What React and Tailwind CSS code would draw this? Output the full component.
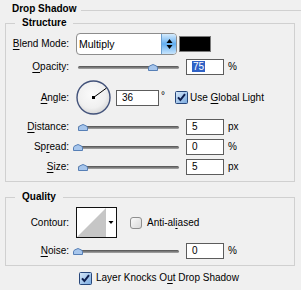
import React from 'react';

function U({ children }) {
  return <span className="underline decoration-1 underline-offset-[2px]">{children}</span>;
}

function Label({ children }) {
  return <div className="w-[63px] shrink-0 text-right leading-[14px]">{children}</div>;
}

function Slider({ thumb }) {
  return (
    <div className="relative ml-[5px] h-[15px] w-[105px] shrink-0">
      <div className="absolute left-[4px] right-0 top-[6px] h-[3px] rounded-full bg-linear-to-b from-[#4f4f4f] to-[#a9a9a9]" />
      <svg className="absolute top-[4px]" style={{ left: thumb - 5 }} width="10" height="7" viewBox="0 0 10 7">
        <path d="M0.5 6.5 V3.8 Q0.5 2.5 2 1.8 L5 0.5 L8 1.8 Q9.5 2.5 9.5 3.8 V6.5 Z" fill="#a7c6ec" stroke="#567fb6" />
      </svg>
    </div>
  );
}

function NumBox({ children, className = '' }) {
  return (
    <div className={`h-[16px] shrink-0 border border-[#5c5c5c] bg-white pl-[5px] leading-[14px] ${className}`}>
      {children}
    </div>
  );
}

function SliderRow({ label, thumb, value, unit, className = '' }) {
  return (
    <div className={`flex h-[16px] items-center ${className}`}>
      <Label>{label}</Label>
      <Slider thumb={thumb} />
      <NumBox className="ml-[7px] w-[38px]">{value}</NumBox>
      <span className="ml-[4px] leading-[14px]">{unit}</span>
    </div>
  );
}

function CheckOn() {
  return (
    <svg width="13" height="13" viewBox="0 0 13 13" className="shrink-0">
      <defs>
        <linearGradient id="cb" x1="0" y1="0" x2="1" y2="1">
          <stop offset="0" stopColor="#d9e9f9" />
          <stop offset="1" stopColor="#78a9df" />
        </linearGradient>
      </defs>
      <rect x="0.5" y="0.5" width="12" height="12" rx="1" fill="url(#cb)" stroke="#27467a" />
      <path d="M3 6.3 L5.4 9 L10 3.2" fill="none" stroke="#0d1d4d" strokeWidth="2" />
    </svg>
  );
}

function CheckOff() {
  return (
    <svg width="12" height="12" viewBox="0 0 12 12" className="shrink-0">
      <defs>
        <linearGradient id="cu" x1="0" y1="0" x2="1" y2="1">
          <stop offset="0" stopColor="#fbfbfb" />
          <stop offset="1" stopColor="#d8d8d8" />
        </linearGradient>
      </defs>
      <rect x="0.5" y="0.5" width="11" height="11" rx="2.5" fill="url(#cu)" stroke="#8e8e8e" />
    </svg>
  );
}

function Dial({ angle }) {
  const r = 16;
  const a = (angle * Math.PI) / 180;
  const x2 = 17.5 + r * Math.cos(a);
  const y2 = 17.5 - r * Math.sin(a);
  return (
    <svg width="35" height="35" viewBox="0 0 35 35" className="ml-[7px] shrink-0">
      <defs>
        <radialGradient id="dial" cx="0.45" cy="0.4" r="0.6">
          <stop offset="0" stopColor="#fafafa" />
          <stop offset="0.7" stopColor="#f0f0f0" />
          <stop offset="1" stopColor="#d9d9d9" />
        </radialGradient>
      </defs>
      <circle cx="17.5" cy="17.5" r="16.5" fill="url(#dial)" stroke="#42527a" strokeWidth="1.4" />
      <line x1="17.5" y1="17.5" x2={x2} y2={y2} stroke="#000" strokeWidth="1" />
      <rect x="16" y="16" width="3" height="3" fill="#000" />
    </svg>
  );
}

function Contour() {
  return (
    <svg width="41" height="31" viewBox="0 0 41 31" className="ml-[7px] shrink-0">
      <rect x="0.5" y="0.5" width="40" height="30" fill="#fff" stroke="#111" />
      <path d="M1 30 L30 1 L30 30 Z" fill="#c6c6c6" />
      <path d="M32.5 14 L37.5 14 L35 17 Z" fill="#000" />
    </svg>
  );
}

export default function App() {
  return (
    <div className="h-[290px] w-[301px] overflow-hidden bg-[#f0f0f0] font-['Liberation_Sans',Arial,sans-serif] text-[10px] text-black select-none">
      <div className="flex h-[16px] items-start pt-[2px]">
        <span className="pl-[12px] font-bold leading-[14px]">Drop Shadow</span>
        <div className="ml-[5px] mt-[8px] h-px flex-1 bg-[#d0d0d0]" />
      </div>

      <fieldset className="ml-[5px] w-[290px] border border-[#d0d0d0] pb-[6px]">
        <legend className="ml-[9px] px-[7px] font-bold leading-[14px]">Structure</legend>

        <div className="mt-[3px] flex h-[22px] items-center">
          <Label>
            <U>B</U>lend Mode:
          </Label>
          <div className="ml-[7px] flex h-[22px] w-[101px] shrink-0 items-center rounded-[4px] border border-[#8d8d8d] bg-white">
            <span className="flex-1 pl-[2px] text-[10.5px] leading-[14px]">Multiply</span>
            <div className="flex h-full w-[15px] items-center justify-center rounded-r-[3px] border-l border-[#6b9fd0] bg-linear-to-b from-[#d5ebfc] via-[#62aef0] to-[#c8e5fc]">
              <svg width="7" height="12" viewBox="0 0 7 12">
                <path d="M0.5 5 L3.5 1 L6.5 5 Z" fill="#000" />
                <path d="M0.5 7 L3.5 11 L6.5 7 Z" fill="#000" />
              </svg>
            </div>
          </div>
          <div className="ml-[2px] h-[16px] w-[32px] shrink-0 border border-[#7a7a7a] bg-black" />
        </div>

        <SliderRow
          className="mt-[4px]"
          label={<><U>O</U>pacity:</>}
          thumb={79}
          value={<span className="bg-[#2f62c6] px-px text-white">75</span>}
          unit="%"
        />

        <div className="mt-[5px] flex h-[35px] items-center">
          <Label>
            <U>A</U>ngle:
          </Label>
          <Dial angle={36} />
          <NumBox className="ml-[5px] w-[43px]">36</NumBox>
          <span className="ml-[2px] -mt-[4px] leading-[14px]">°</span>
          <div className="ml-[10px] flex items-center">
            <CheckOn />
            <span className="ml-[2px] leading-[14px]">
              Use <U>G</U>lobal Light
            </span>
          </div>
        </div>

        <SliderRow className="mt-[4px]" label={<><U>D</U>istance:</>} thumb={9} value="5" unit="px" />
        <SliderRow className="mt-[4px]" label={<>Sp<U>r</U>ead:</>} thumb={4} value="0" unit="%" />
        <SliderRow className="mt-[4px]" label={<><U>S</U>ize:</>} thumb={9} value="5" unit="px" />
      </fieldset>

      <fieldset className="ml-[5px] mt-[8px] w-[290px] border border-[#d0d0d0] pb-[6px]">
        <legend className="ml-[9px] px-[7px] font-bold leading-[14px]">Quality</legend>

        <div className="mt-[3px] flex h-[31px] items-center">
          <Label>Contour:</Label>
          <Contour />
          <div className="ml-[13px] flex items-center">
            <CheckOff />
            <span className="ml-[5px] leading-[14px]">
              Anti-al<U>i</U>ased
            </span>
          </div>
        </div>

        <SliderRow className="mt-[5px]" label={<><U>N</U>oise:</>} thumb={4} value="0" unit="%" />
      </fieldset>

      <div className="ml-[79px] mt-[5px] flex items-center">
        <CheckOn />
        <span className="ml-[4px] leading-[14px]">
          Layer Knocks O<U>u</U>t Drop Shadow
        </span>
      </div>
    </div>
  );
}
